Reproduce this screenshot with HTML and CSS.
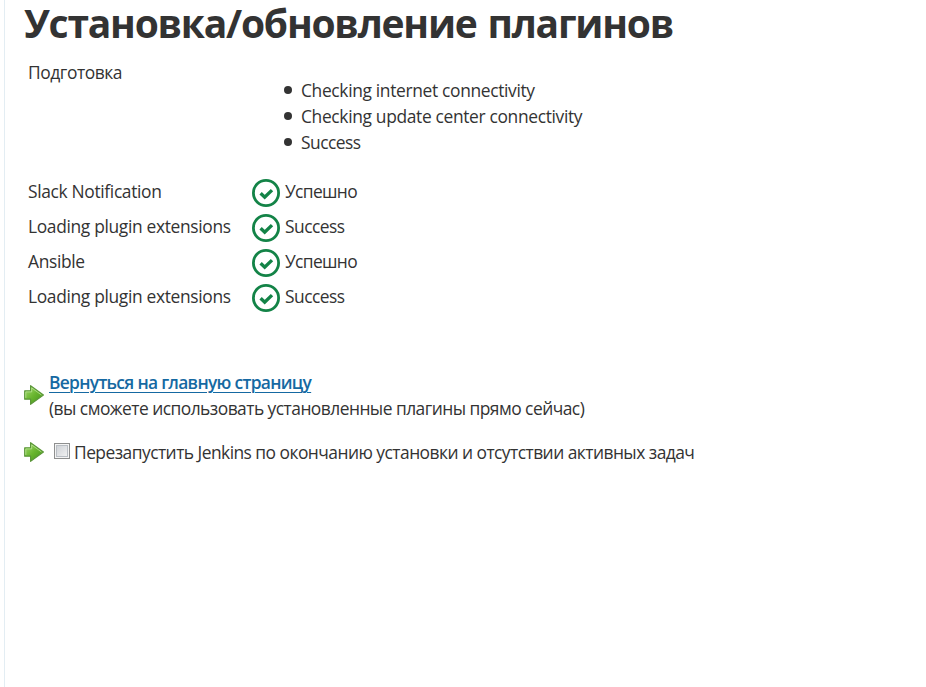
FILE: index.html
```html
<!DOCTYPE html>
<html lang="ru">
<head>
<meta charset="utf-8">
<title>Установка/обновление плагинов</title>
<link rel="stylesheet" href="styles.css">
</head>
<body>
<svg class="defs" aria-hidden="true">
  <defs>
    <linearGradient id="arrow-fill" x1="0" y1="0" x2="1" y2="1">
      <stop offset="0" stop-color="#a5dc70"/><stop offset="0.5" stop-color="#69b52f"/><stop offset="1" stop-color="#3f9217"/>
    </linearGradient>
    <symbol id="ok" viewBox="0 0 28 28">
      <circle cx="14" cy="14" r="12.6" fill="none" stroke="#138347" stroke-width="2.8"/>
      <path d="M8.6 14.3 12.7 18.2 20 11.1" fill="none" stroke="#138347" stroke-width="3.4"/>
    </symbol>
    <symbol id="arrow" viewBox="0 0 20 20">
      <path d="M.7 5.8H6.6V.7L19.4 10 6.6 19.3V14.2H.7Z" fill="url(#arrow-fill)" stroke="#5b9639" stroke-width="1.2" stroke-linejoin="round"/>
      <path d="M1.8 12.9V6.9H7.7V2.9L17.5 10" fill="none" stroke="#b9e493" stroke-width=".8"/>
    </symbol>
  </defs>
</svg>
<main class="panel">
  <h1>Установка/обновление плагинов</h1>
  <div class="jobs">
    <div class="job prep"><span class="name cyr">Подготовка</span>
      <ul><li>Checking internet connectivity</li><li>Checking update center connectivity</li><li class="tight">Success</li></ul>
    </div>
    <div class="job"><span class="name">Slack Notification</span><svg class="ok"><use href="#ok"/></svg><span class="status cyr">Успешно</span></div>
    <div class="job"><span class="name">Loading plugin extensions</span><svg class="ok"><use href="#ok"/></svg><span class="status">Success</span></div>
    <div class="job"><span class="name">Ansible</span><svg class="ok"><use href="#ok"/></svg><span class="status cyr">Успешно</span></div>
    <div class="job"><span class="name">Loading plugin extensions</span><svg class="ok"><use href="#ok"/></svg><span class="status">Success</span></div>
  </div>
  <div class="action home"><svg class="arrow"><use href="#arrow"/></svg>
    <div class="cyr"><a href="#">Вернуться на главную страницу</a><br>(вы сможете использовать установленные плагины прямо сейчас)</div></div>
  <div class="action"><svg class="arrow"><use href="#arrow"/></svg>
    <label class="cyr"><input type="checkbox"><span>Перезапустить Jenkins по окончанию установки и отсутствии активных задач</span></label></div>
</main>
</body>
</html>
```
FILE: styles.css
```css
* { box-sizing: border-box; }
body { margin: 0; background: #fff; color: #333; font: 17.4px/26px "Open Sans", "Noto Sans", sans-serif; letter-spacing: -.34px; }
.defs { position: absolute; width: 0; height: 0; }
.panel { height: 687px; margin-left: 4px; padding-left: 19px; border-left: 1px solid #e3edf3; white-space: nowrap; }
h1 { margin: 0; height: 60px; font-size: 39px; line-height: 46px; font-weight: 700; letter-spacing: -1.24px; word-spacing: 2px; }
.cyr { letter-spacing: -.53px; }
.jobs { padding-left: 3px; }
.job { display: flex; height: 35px; align-items: center; }
.name { width: 225px; flex: none; padding-left: 1px; }
.job .name, .status { padding-bottom: 3px; }
.status, .tight { letter-spacing: -.53px; }
.status.cyr { letter-spacing: -.65px; }
.prep { height: 115px; align-items: flex-start; }
.prep .name { margin-top: -1px; letter-spacing: -.43px; }
.prep ul { margin: 17px 0 0; padding: 0 0 0 49px; list-style: none; }
.prep li { position: relative; }
.prep li::before { content: ""; position: absolute; left: -17px; top: 9px; width: 8px; height: 8px; border-radius: 50%; background: #333; }
.ok { width: 28px; height: 28px; margin-right: 5px; }
.action { display: flex; align-items: center; height: 26px; }
.arrow { width: 20px; height: 20px; margin-right: 5px; }
.home { height: 52px; margin: 54px 0 18px; }
a { color: #1569a2; font-weight: 600; letter-spacing: -.7px; text-decoration-thickness: 1px; text-underline-offset: 3px; }
label { display: flex; align-items: center; }
input { appearance: none; width: 16px; height: 16px; margin: -2px 4px 0 5px; border: 1px solid #8e8f8f; background: linear-gradient(135deg, #c9cdd2, #f6f6f6); box-shadow: inset 0 0 0 1px #f4f4f4, inset 0 0 0 2px #b9bec4; }
```
